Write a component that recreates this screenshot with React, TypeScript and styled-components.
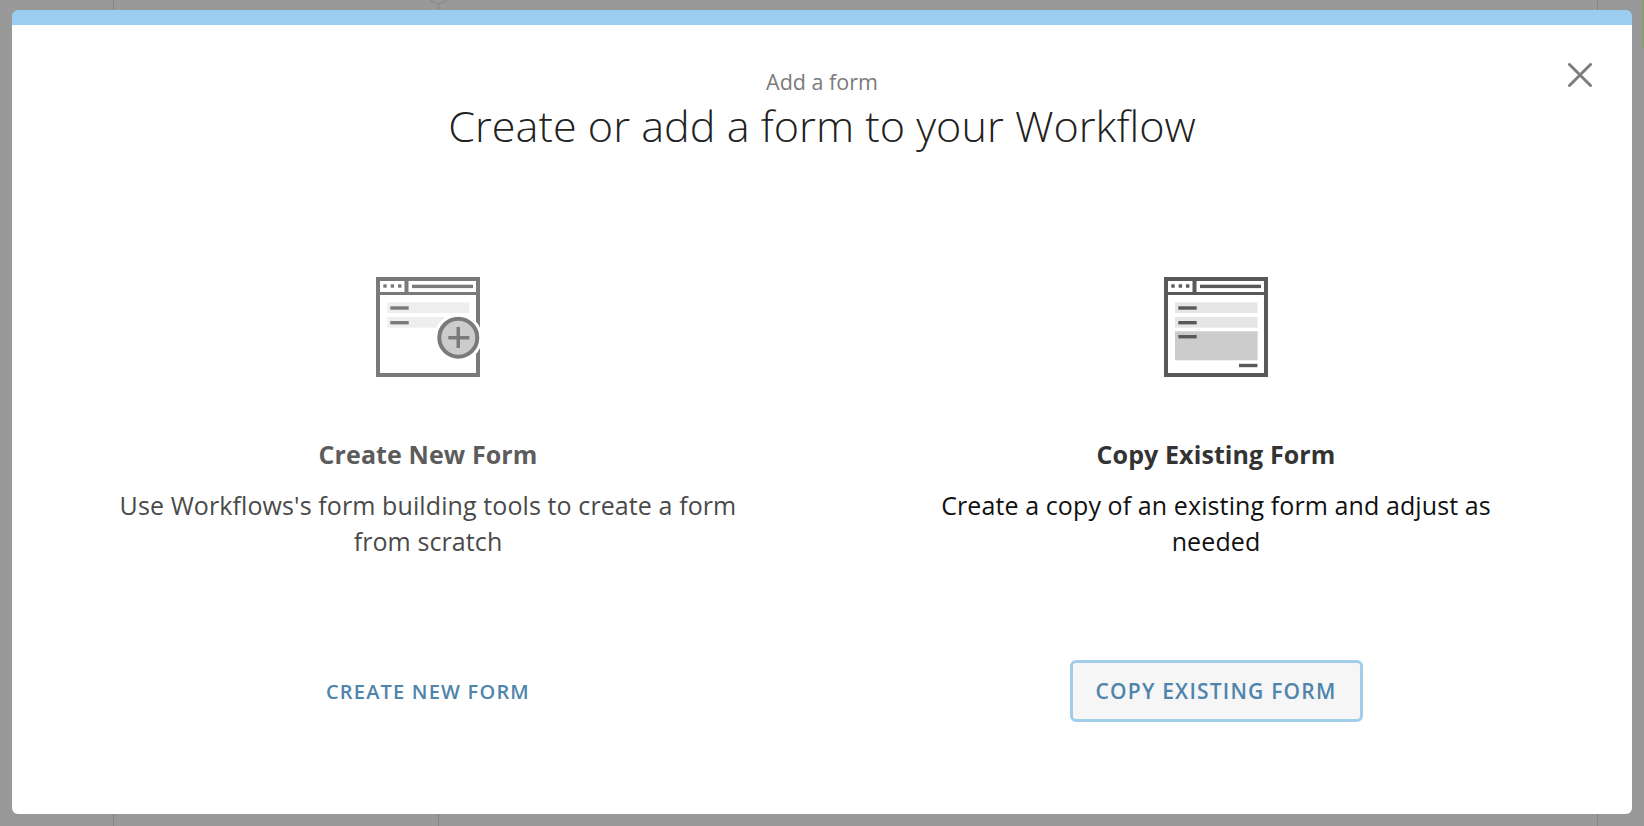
import React from "react";
import styled, { createGlobalStyle } from "styled-components";

const Global = createGlobalStyle`
  html, body { margin: 0; padding: 0; height: 100%; }
  body {
    font-family: "Open Sans", "Liberation Sans", sans-serif;
    background-color: #999999;
    background-image:
      linear-gradient(#85a06e, #85a06e),
      linear-gradient(#858585, #858585),
      linear-gradient(#858585, #858585),
      linear-gradient(#858585, #858585);
    background-repeat: no-repeat;
    background-size: 2px 48px, 1px 100%, 1px 100%, 1px 100%;
    background-position: 1642px 0, 113px 0, 438px 0, 1597px 0;
  }
`;

const Page = styled.div`
  position: relative;
  box-sizing: border-box;
  width: 1644px;
  height: 826px;
  padding: 10px 12px 12px;
  overflow: hidden;
`;

const BackdropNode = styled.div`
  position: absolute;
  left: 426px;
  top: -21px;
  width: 23px;
  height: 23px;
  border: 1px solid #858585;
  border-radius: 50%;
  background: #999999;
`;

const Modal = styled.section`
  position: relative;
  box-sizing: border-box;
  height: 804px;
  background: #ffffff;
  border-top: 15px solid #9bcdf0;
  border-radius: 6px;
  padding: 0 22px;
  display: flex;
  flex-direction: column;
`;

const Header = styled.header`
  padding-top: 43px;
  text-align: center;
`;

const Eyebrow = styled.div`
  font-size: 21.5px;
  line-height: 28px;
  color: #7b7b7b;
`;

const Title = styled.h1`
  margin: 0;
  padding-top: 1px;
  font-size: 43.2px;
  line-height: 58px;
  font-weight: 300;
  color: #222222;
`;

const Close = styled.button`
  position: absolute;
  top: 38px;
  right: 40px;
  width: 24px;
  height: 24px;
  padding: 0;
  border: 0;
  background: none;
  color: #7d7d7d;
  svg { display: block; }
`;

const Columns = styled.div`
  display: grid;
  grid-template-columns: 1fr 1fr;
  margin-top: 122px;
`;

const Option = styled.article<{ $active?: boolean }>`
  display: flex;
  flex-direction: column;
  align-items: center;
  text-align: center;
  color: ${(p) => (p.$active ? "#111111" : "#4a4a4a")};
`;

const IconWrap = styled.div`
  width: 104px;
  height: 100px;
  svg { display: block; }
`;

const OptionTitle = styled.h2<{ $active?: boolean }>`
  margin: 59px 0 0;
  font-size: 25px;
  line-height: 36px;
  font-weight: 700;
  letter-spacing: 0.1px;
  color: ${(p) => (p.$active ? "#333333" : "#5c5c5c")};
`;

const Description = styled.p`
  margin: 15px 0 0;
  width: 625px;
  font-size: 25px;
  line-height: 36px;
  font-weight: 400;
  letter-spacing: 0.1px;
`;

const ActionButton = styled.button<{ $active?: boolean }>`
  box-sizing: border-box;
  margin-top: 101px;
  width: 293px;
  height: 62px;
  border-radius: 6px;
  border: 3px solid ${(p) => (p.$active ? "#a0cee9" : "transparent")};
  background: ${(p) => (p.$active ? "#f6f6f7" : "transparent")};
  color: #4f84ab;
  font-family: inherit;
  font-size: ${(p) => (p.$active ? "21px" : "20px")};
  font-weight: 600;
  letter-spacing: 1.2px;
  text-transform: uppercase;
`;

const FormChrome = ({ c }: { c: string }) => (
  <>
    <rect x="2" y="2" width="100" height="96" fill="#fff" stroke={c} strokeWidth="4" />
    <rect x="2" y="15" width="100" height="3" fill={c} />
    <rect x="28.5" y="2" width="4" height="14" fill={c} />
    <rect x="7.3" y="7.3" width="3.4" height="3.4" fill={c} />
    <rect x="14.7" y="7.3" width="3.4" height="3.4" fill={c} />
    <rect x="22" y="7.3" width="3.4" height="3.4" fill={c} />
    <rect x="36" y="7.7" width="61" height="3.4" fill={c} />
  </>
);

const NewFormIcon = () => (
  <svg width="104" height="100" viewBox="0 0 104 100">
    <FormChrome c="#7a7a7a" />
    <rect x="11.3" y="25.3" width="82" height="10.7" fill="#eeeeee" />
    <rect x="11.3" y="40" width="82" height="10.7" fill="#eeeeee" />
    <rect x="14.3" y="29.3" width="18.4" height="3.4" fill="#7a7a7a" />
    <rect x="14.3" y="44" width="18.4" height="3.4" fill="#7a7a7a" />
    <circle cx="82.3" cy="60.7" r="24" fill="#fff" />
    <circle cx="82.3" cy="60.7" r="19" fill="#cccccc" stroke="#7a7a7a" strokeWidth="4" />
    <rect x="72.3" y="59" width="21" height="3.5" fill="#7a7a7a" />
    <rect x="80.5" y="50" width="3.5" height="21" fill="#7a7a7a" />
  </svg>
);

const CopyFormIcon = () => (
  <svg width="104" height="100" viewBox="0 0 104 100">
    <FormChrome c="#595959" />
    <rect x="11" y="25.3" width="82.6" height="10.7" fill="#e6e6e6" />
    <rect x="11" y="40" width="82.6" height="10.7" fill="#e6e6e6" />
    <rect x="11" y="54.3" width="82.6" height="29" fill="#cccccc" />
    <rect x="14.3" y="29.3" width="18.4" height="3.4" fill="#595959" />
    <rect x="14.3" y="44" width="18.4" height="3.4" fill="#595959" />
    <rect x="14.3" y="58" width="18.4" height="3.4" fill="#595959" />
    <rect x="75" y="86.8" width="18.4" height="3.4" fill="#595959" />
  </svg>
);

export default function App() {
  return (
    <Page>
      <Global />
      <BackdropNode />
      <Modal>
        <Close aria-label="Close">
          <svg width="24" height="24" viewBox="0 0 24 24" fill="none" stroke="currentColor" strokeWidth="3" strokeLinecap="round">
            <path d="M1.5 1.5L22.5 22.5M22.5 1.5L1.5 22.5" />
          </svg>
        </Close>
        <Header>
          <Eyebrow>Add a form</Eyebrow>
          <Title>Create or add a form to your Workflow</Title>
        </Header>
        <Columns>
          <Option>
            <IconWrap><NewFormIcon /></IconWrap>
            <OptionTitle>Create New Form</OptionTitle>
            <Description>Use Workflows's form building tools to create a form from scratch</Description>
            <ActionButton>Create New Form</ActionButton>
          </Option>
          <Option $active>
            <IconWrap><CopyFormIcon /></IconWrap>
            <OptionTitle $active>Copy Existing Form</OptionTitle>
            <Description>Create a copy of an existing form and adjust as needed</Description>
            <ActionButton $active>Copy Existing Form</ActionButton>
          </Option>
        </Columns>
      </Modal>
    </Page>
  );
}
